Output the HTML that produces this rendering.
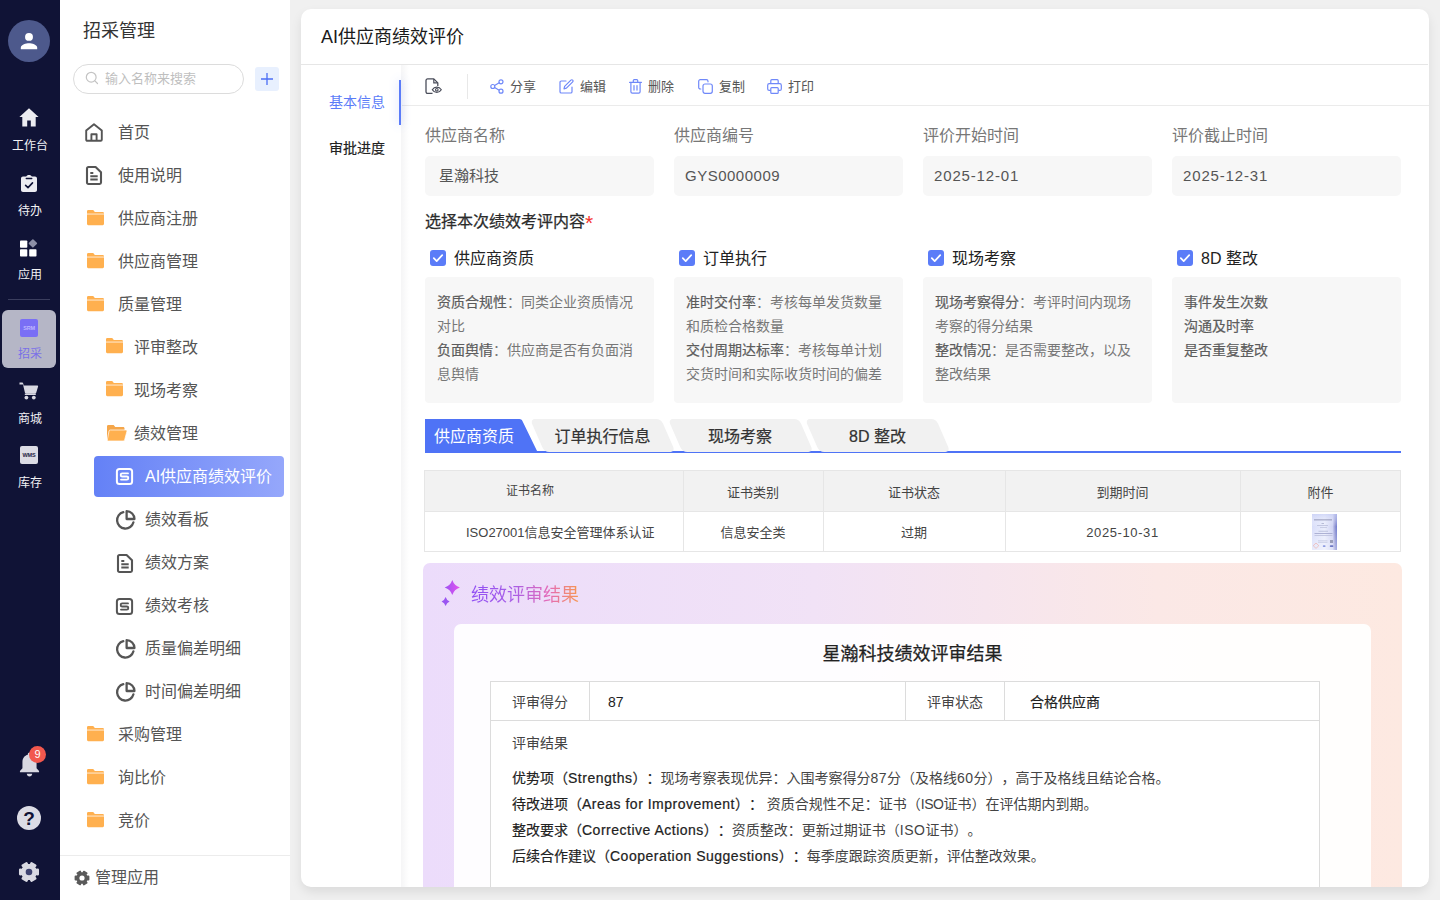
<!DOCTYPE html>
<html lang="zh-CN">
<head>
<meta charset="utf-8">
<title>AI供应商绩效评价</title>
<style>
*{box-sizing:border-box;margin:0;padding:0}
html,body{width:1440px;height:900px;overflow:hidden}
body{position:relative;background:#f0f0f0;font-family:"Liberation Sans","Noto Sans CJK SC",sans-serif;color:#333;-webkit-font-smoothing:antialiased;text-spacing-trim:space-all}
.abs{position:absolute}
svg{display:block;overflow:visible}
/* rail */
#rail{position:absolute;left:0;top:0;width:60px;height:900px;background:#101336}
#rail .avatar{position:absolute;left:8px;top:20px;width:42px;height:42px;border-radius:50%;background:#4d598c}
.ri{position:absolute;left:0;width:60px;text-align:center;color:#f2f2f5;font-size:12px;line-height:14px}
.ri svg{margin:0 auto}
.ri .t{position:absolute;left:0;width:60px;text-align:center}
/* sidebar */
#side{position:absolute;left:60px;top:0;width:230px;height:900px;background:#fff}
#sideshadow{position:absolute;left:290px;top:0;width:10px;height:900px;background:linear-gradient(90deg,#e9e9e9,#f0f0f0)}
.mi{position:absolute;font-size:16px;line-height:20px;color:#555;white-space:nowrap}
.ic{position:absolute}
/* card */
#card{position:absolute;left:301px;top:9px;width:1128px;height:878px;background:#fff;border-radius:10px;overflow:hidden;box-shadow:0 5px 12px -1px rgba(0,0,0,.10)}
.t13{font-size:13px}
.tb{position:absolute;top:77px;font-size:13px;line-height:18px;color:#555;white-space:nowrap}
.lab{position:absolute;font-size:16px;line-height:22px;color:#777;white-space:nowrap}
.inp{position:absolute;top:156px;width:229px;height:40px;background:#f7f7f7;border-radius:5px;font-size:15px;line-height:40px;color:#555;padding-left:14px;white-space:nowrap}
.cb{position:absolute;top:250px;width:16px;height:16px;border-radius:3px;background:#5b7cf8}
.cbl{position:absolute;top:247px;font-size:16px;line-height:22px;color:#222;white-space:nowrap}
.desc{position:absolute;top:277px;width:229px;height:126px;background:#f7f7f7;border-radius:4px;padding:13px 12px 0 12px;font-size:14px;line-height:24px;color:#777}
.desc b{font-weight:400;color:#5c5c5c;-webkit-text-stroke:.2px #5c5c5c}
.gtab{position:absolute;top:419px;height:32.5px;width:131px;background:#f1f1f1;border-radius:5px;transform:skewX(23.6deg);transform-origin:0 0}
.gtt{position:absolute;top:425px;font-size:16px;line-height:22px;color:#333;font-weight:400;-webkit-text-stroke:.22px #333;white-space:nowrap;text-align:center}
.th{position:absolute;font-size:13px;line-height:18px;color:#444;white-space:nowrap;text-align:center}
.rl{position:absolute;left:512px;font-size:14px;line-height:20px;color:#444;white-space:nowrap}
.rl b{font-weight:400;color:#222;-webkit-text-stroke:.18px #222}
.rl i{font-style:normal;font-weight:400;letter-spacing:.5px;-webkit-text-stroke:.22px #222}
.rl u{text-decoration:none;letter-spacing:.5px}
</style>
</head>
<body>
<div id="rail">
<div class="avatar"><svg width="42" height="42" viewBox="0 0 42 42"><circle cx="21" cy="16.900" r="3.950" fill="#fff"/><path d="M12.800 29.200v-1.500c0-3 5.400-4.400 8.200-4.400s8.200 1.400 8.200 4.400v1.500z" fill="#fff"/></svg></div>
<!-- 工作台 -->
<svg class="abs" style="left:19px;top:108px" width="20" height="19" viewBox="0 0 20 19"><path d="M10 0.3 0.4 9h2.9v9.6h4.9v-6.2h3.6v6.2h4.9V9h2.9z" fill="#ececf1"/></svg>
<div class="ri" style="top:139px">工作台</div>
<!-- 待办 -->
<svg class="abs" style="left:21px;top:175px" width="16" height="17" viewBox="0 0 16 17"><path d="M5.2 1.6C5.5.7 6.6 0 8 0s2.500.7 2.800 1.600H14c1.100 0 2 .9 2 2V15c0 1.100-.9 2-2 2H2c-1.100 0-2-.9-2-2V3.600c0-1.100.9-2 2-2z" fill="#ececf1"/><path d="M5.300 3.400h5.400" stroke="#101336" stroke-width="1.500" stroke-linecap="round"/><path d="M4.600 10.300 7 12.600l4.500-4.700" fill="none" stroke="#101336" stroke-width="1.600" stroke-linecap="round" stroke-linejoin="round"/></svg>
<div class="ri" style="top:204px">待办</div>
<!-- 应用 -->
<svg class="abs" style="left:20px;top:239px" width="18" height="18" viewBox="0 0 18 18"><rect x="0" y="1.500" width="7.300" height="7.300" rx=".8" fill="#fff"/><rect x="0" y="10.300" width="7.300" height="7.300" rx=".8" fill="#fff"/><rect x="9.200" y="10.300" width="7.300" height="7.300" rx=".8" fill="#fff"/><rect x="9.700" y="1.200" width="6.400" height="6.400" rx=".8" transform="rotate(45 12.900 4.400)" fill="#8d8fa6"/></svg>
<div class="ri" style="top:268px">应用</div>
<div class="abs" style="left:8px;top:299px;width:42px;height:1px;background:#3b3e5e"></div>
<!-- 招采 selected -->
<div class="abs" style="left:2px;top:310px;width:54px;height:58px;border-radius:6px;background:#b5b6c6"></div>
<div class="abs" style="left:20px;top:319px;width:18px;height:18px;border-radius:2px;background:#7a6ff5"></div>
<div class="abs" style="left:20px;top:324px;width:18px;text-align:center;font-size:5.500px;line-height:8px;color:#bdb6ff;font-weight:bold;letter-spacing:-.2px">SRM</div>
<div class="ri" style="top:347px;color:#7a70e8">招采</div>
<!-- 商城 -->
<svg class="abs" style="left:19px;top:382px" width="20" height="18" viewBox="0 0 20 18"><path d="M.5 0.600h2.700c.5 0 .9.300 1 .8l.5 2h13.600c.6 0 1 .6.800 1.200l-1.900 6.100c-.2.600-.7 1-1.400 1H7.300c-.7 0-1.300-.5-1.400-1.200L4 2.600H.5z" fill="#d9d9e2"/><circle cx="7.400" cy="15.600" r="1.900" fill="#d9d9e2"/><circle cx="14.800" cy="15.600" r="1.900" fill="#d9d9e2"/><path d="M5.800 12.300h11" stroke="#d9d9e2" stroke-width="1.400"/></svg>
<div class="ri" style="top:412px">商城</div>
<!-- 库存 -->
<div class="abs" style="left:20px;top:446px;width:18px;height:18px;border-radius:2px;background:#dcdce5"></div>
<div class="abs" style="left:20px;top:451px;width:18px;text-align:center;font-size:5.500px;line-height:8px;color:#20223f;font-weight:bold;letter-spacing:-.2px">WMS</div>
<div class="ri" style="top:476px">库存</div>
<!-- bell -->
<svg class="abs" style="left:18.500px;top:750.500px" width="21" height="27" viewBox="0 0 20 26"><path d="M10 1.500c.9 0 1.600.7 1.600 1.600v.6c3.100.7 5.200 3.400 5.200 6.800v6.200l2.400 2.500v1.200H.8v-1.200l2.400-2.500v-6.200c0-3.400 2.100-6.100 5.200-6.800v-.6c0-.9.700-1.600 1.600-1.600z" fill="#d9d9e2"/><path d="M7.400 22h5.200c0 1.500-1.200 2.600-2.600 2.600S7.400 23.500 7.400 22z" fill="#d9d9e2"/></svg>
<div class="abs" style="left:29px;top:746px;width:17px;height:17px;border-radius:50%;background:#f2584e;color:#fff;font-size:11px;line-height:17px;text-align:center">9</div>
<!-- help -->
<div class="abs" style="left:17px;top:806px;width:24px;height:24px;border-radius:50%;background:#dcdce5;color:#101336;font-size:19px;font-weight:bold;line-height:25px;text-align:center">?</div>
<!-- gear -->
<svg class="abs" style="left:18.700px;top:862px" width="20" height="20" viewBox="-10 -10 20 20"><path d="M8.83 -2.20L8.83 2.20L6.63 1.90L4.96 4.79L6.32 6.55L2.51 8.75L1.67 6.70L-1.67 6.70L-2.51 8.75L-6.32 6.55L-4.96 4.79L-6.63 1.90L-8.83 2.20L-8.83 -2.20L-6.63 -1.90L-4.96 -4.79L-6.32 -6.55L-2.51 -8.75L-1.67 -6.70L1.67 -6.70L2.51 -8.75L6.32 -6.55L4.96 -4.79L6.63 -1.90Z" fill="#d9d9e2" stroke="#d9d9e2" stroke-width="2.400" stroke-linejoin="round"/><circle r="3.300" fill="#3d416f"/></svg>
</div>
<div id="side">
<div class="abs" style="left:23px;top:18px;font-size:18px;line-height:26px;color:#333">招采管理</div>
<div class="abs" style="left:13px;top:64px;width:171px;height:30px;border:1px solid #dcdcdc;border-radius:15px"></div>
<svg class="abs" style="left:25px;top:71px" width="14" height="14" viewBox="0 0 14 14"><circle cx="6.200" cy="6.200" r="4.900" fill="none" stroke="#c4c4c4" stroke-width="1.200"/><path d="M9.900 9.900l2.600 2.600" stroke="#c4c4c4" stroke-width="1.200" stroke-linecap="round"/></svg>
<div class="abs" style="left:45px;top:70px;font-size:13px;line-height:18px;color:#bfbfbf">输入名称来搜索</div>
<div class="abs" style="left:195px;top:67px;width:24px;height:24px;border-radius:3px;background:#e8f0fe"></div>
<svg class="abs" style="left:201px;top:73px" width="12" height="12" viewBox="0 0 12 12"><path d="M6 0v12M0 6h12" stroke="#4c6ef5" stroke-width="1.300"/></svg>
<svg class="ic" style="left:25px;top:123px" width="18" height="19" viewBox="0 0 18 19"><path d="M1.200 7.600 9 1.300l7.800 6.300v9.100c0 .6-.5 1.100-1.100 1.100H2.300c-.6 0-1.100-.5-1.100-1.100z" fill="none" stroke="#555" stroke-width="1.900" stroke-linejoin="round"/><path d="M6.400 17.500v-6.300h5.200v6.300" fill="none" stroke="#555" stroke-width="1.900" stroke-linejoin="round"/></svg>
<div class="mi" style="left:58px;top:123px">首页</div>
<svg class="ic" style="left:26px;top:166px" width="16" height="19" viewBox="0 0 16 19"><path d="M2.400 1h7.200L15 6.200v10.400c0 .8-.6 1.400-1.400 1.400H2.400C1.600 18 1 17.400 1 16.600V2.400C1 1.600 1.600 1 2.400 1z" fill="none" stroke="#555" stroke-width="2.1" stroke-linejoin="round"/><path d="M4.300 7h3M4.300 10.300h7.400M4.300 13.600h7.400" stroke="#555" stroke-width="2"/></svg>
<div class="mi" style="left:58px;top:166px">使用说明</div>
<svg class="ic" style="left:26.7px;top:209.8px" width="17" height="15.200" viewBox="0 0 18 15" preserveAspectRatio="none"><path d="M1.300 0h5.300l1.700 1.900h8.400c.7 0 1.300.6 1.300 1.300v10.500c0 .7-.6 1.300-1.300 1.300H1.300C.6 15 0 14.400 0 13.700V1.300C0 .6.600 0 1.300 0z" fill="#ffb04f"/><path d="M0 4h18" stroke="#fff" stroke-width=".9" opacity=".85"/></svg>
<div class="mi" style="left:58px;top:209px">供应商注册</div>
<svg class="ic" style="left:26.7px;top:252.8px" width="17" height="15.200" viewBox="0 0 18 15" preserveAspectRatio="none"><path d="M1.300 0h5.300l1.700 1.900h8.400c.7 0 1.300.6 1.300 1.300v10.500c0 .7-.6 1.300-1.300 1.300H1.300C.6 15 0 14.400 0 13.700V1.300C0 .6.600 0 1.300 0z" fill="#ffb04f"/><path d="M0 4h18" stroke="#fff" stroke-width=".9" opacity=".85"/></svg>
<div class="mi" style="left:58px;top:252px">供应商管理</div>
<svg class="ic" style="left:26.7px;top:295.8px" width="17" height="15.200" viewBox="0 0 18 15" preserveAspectRatio="none"><path d="M1.300 0h5.300l1.700 1.900h8.400c.7 0 1.300.6 1.300 1.300v10.500c0 .7-.6 1.300-1.300 1.300H1.300C.6 15 0 14.400 0 13.700V1.300C0 .6.600 0 1.300 0z" fill="#ffb04f"/><path d="M0 4h18" stroke="#fff" stroke-width=".9" opacity=".85"/></svg>
<div class="mi" style="left:58px;top:295px">质量管理</div>
<svg class="ic" style="left:45.8px;top:337.8px" width="17" height="15.200" viewBox="0 0 18 15" preserveAspectRatio="none"><path d="M1.300 0h5.300l1.700 1.900h8.400c.7 0 1.300.6 1.300 1.300v10.500c0 .7-.6 1.300-1.300 1.300H1.300C.6 15 0 14.400 0 13.700V1.300C0 .6.600 0 1.300 0z" fill="#ffb04f"/><path d="M0 4h18" stroke="#fff" stroke-width=".9" opacity=".85"/></svg>
<div class="mi" style="left:74px;top:338px">评审整改</div>
<svg class="ic" style="left:45.8px;top:380.8px" width="17" height="15.200" viewBox="0 0 18 15" preserveAspectRatio="none"><path d="M1.300 0h5.300l1.700 1.900h8.400c.7 0 1.300.6 1.300 1.300v10.500c0 .7-.6 1.300-1.300 1.300H1.300C.6 15 0 14.400 0 13.700V1.300C0 .6.600 0 1.300 0z" fill="#ffb04f"/><path d="M0 4h18" stroke="#fff" stroke-width=".9" opacity=".85"/></svg>
<div class="mi" style="left:74px;top:381px">现场考察</div>
<svg class="ic" style="left:46.500px;top:425px" width="20" height="16" viewBox="0 0 20 16"><path d="M1.300 0h5.300l1.700 1.900h7.900c.7 0 1.300.6 1.300 1.300V14H0V1.300C0 .6.600 0 1.300 0z" fill="#f5a64a"/><path d="M3.300 5h15.600c.7 0 1.200.7 1 1.400l-2.300 8.500c-.2.600-.7 1.100-1.300 1.100H1.200c-.6 0-1-.5-.9-1.100L2 6c.1-.6.700-1 1.300-1z" fill="#ffb04f" stroke="#fff" stroke-width=".7"/></svg>
<div class="mi" style="left:74px;top:424px">绩效管理</div>
<div class="abs" style="left:34px;top:456px;width:190px;height:41px;border-radius:4px;background:linear-gradient(90deg,#6481f6,#95a7fb)"></div>
<svg class="ic" style="left:56px;top:468px" width="17" height="17" viewBox="0 0 17 17"><rect x=".9" y=".9" width="15.200" height="15.200" rx="2.600" fill="none" stroke="#fff" stroke-width="2"/><path d="M12 5.400H6.200c-.9 0-1.500.7-1.500 1.500s.6 1.600 1.500 1.600h4.600c.9 0 1.500.7 1.500 1.500s-.6 1.600-1.500 1.600H5" fill="none" stroke="#fff" stroke-width="1.85" stroke-linecap="round"/></svg>
<div class="mi" style="left:85px;top:467px;color:#fff">AI供应商绩效评价</div>
<svg class="ic" style="left:54.60px;top:510.30px" width="20.5" height="20.5" viewBox="0 0 18 18"><path d="M7.300 1.900A7.300 7.300 0 1 0 16.200 10.800" fill="none" stroke="#555" stroke-width="2" stroke-linecap="round"/><path d="M10.200 1v6.900h6.900A6.900 6.900 0 0 0 10.200 1z" fill="none" stroke="#555" stroke-width="2" stroke-linejoin="round"/></svg>
<div class="mi" style="left:85px;top:510px">绩效看板</div>
<svg class="ic" style="left:57px;top:554px" width="16" height="19" viewBox="0 0 16 19"><path d="M2.400 1h7.200L15 6.200v10.400c0 .8-.6 1.400-1.400 1.400H2.400C1.600 18 1 17.400 1 16.600V2.400C1 1.600 1.600 1 2.400 1z" fill="none" stroke="#555" stroke-width="2.1" stroke-linejoin="round"/><path d="M4.300 7h3M4.300 10.300h7.400M4.300 13.600h7.400" stroke="#555" stroke-width="2"/></svg>
<div class="mi" style="left:85px;top:553px">绩效方案</div>
<svg class="ic" style="left:56px;top:598px" width="17" height="17" viewBox="0 0 17 17"><rect x=".9" y=".9" width="15.200" height="15.200" rx="2.600" fill="none" stroke="#555" stroke-width="2"/><path d="M12 5.400H6.200c-.9 0-1.500.7-1.500 1.500s.6 1.600 1.500 1.600h4.600c.9 0 1.500.7 1.500 1.500s-.6 1.600-1.500 1.600H5" fill="none" stroke="#555" stroke-width="1.85" stroke-linecap="round"/></svg>
<div class="mi" style="left:85px;top:596px">绩效考核</div>
<svg class="ic" style="left:54.60px;top:639.30px" width="20.5" height="20.5" viewBox="0 0 18 18"><path d="M7.300 1.900A7.300 7.300 0 1 0 16.200 10.800" fill="none" stroke="#555" stroke-width="2" stroke-linecap="round"/><path d="M10.200 1v6.900h6.900A6.900 6.900 0 0 0 10.200 1z" fill="none" stroke="#555" stroke-width="2" stroke-linejoin="round"/></svg>
<div class="mi" style="left:85px;top:639px">质量偏差明细</div>
<svg class="ic" style="left:54.60px;top:682.30px" width="20.5" height="20.5" viewBox="0 0 18 18"><path d="M7.300 1.900A7.300 7.300 0 1 0 16.200 10.800" fill="none" stroke="#555" stroke-width="2" stroke-linecap="round"/><path d="M10.200 1v6.900h6.900A6.900 6.900 0 0 0 10.200 1z" fill="none" stroke="#555" stroke-width="2" stroke-linejoin="round"/></svg>
<div class="mi" style="left:85px;top:682px">时间偏差明细</div>
<svg class="ic" style="left:26.7px;top:725.8px" width="17" height="15.200" viewBox="0 0 18 15" preserveAspectRatio="none"><path d="M1.300 0h5.300l1.700 1.900h8.400c.7 0 1.300.6 1.300 1.300v10.500c0 .7-.6 1.300-1.300 1.300H1.300C.6 15 0 14.400 0 13.700V1.300C0 .6.600 0 1.300 0z" fill="#ffb04f"/><path d="M0 4h18" stroke="#fff" stroke-width=".9" opacity=".85"/></svg>
<div class="mi" style="left:58px;top:725px">采购管理</div>
<svg class="ic" style="left:26.7px;top:768.8px" width="17" height="15.200" viewBox="0 0 18 15" preserveAspectRatio="none"><path d="M1.300 0h5.300l1.700 1.900h8.400c.7 0 1.300.6 1.300 1.300v10.500c0 .7-.6 1.300-1.300 1.300H1.300C.6 15 0 14.400 0 13.700V1.300C0 .6.600 0 1.300 0z" fill="#ffb04f"/><path d="M0 4h18" stroke="#fff" stroke-width=".9" opacity=".85"/></svg>
<div class="mi" style="left:58px;top:768px">询比价</div>
<svg class="ic" style="left:26.7px;top:811.8px" width="17" height="15.200" viewBox="0 0 18 15" preserveAspectRatio="none"><path d="M1.300 0h5.300l1.700 1.900h8.400c.7 0 1.300.6 1.300 1.300v10.500c0 .7-.6 1.300-1.300 1.300H1.300C.6 15 0 14.400 0 13.700V1.300C0 .6.600 0 1.300 0z" fill="#ffb04f"/><path d="M0 4h18" stroke="#fff" stroke-width=".9" opacity=".85"/></svg>
<div class="mi" style="left:58px;top:811px">竞价</div>

<div class="abs" style="left:0;top:855px;width:230px;height:1px;background:#ececec"></div>
<svg class="abs" style="left:13.600px;top:870px" width="16" height="16" viewBox="-8 -8 16 16"><path d="M6.50 -1.62L6.50 1.62L4.90 1.41L3.67 3.54L4.65 4.82L1.85 6.44L1.23 4.95L-1.23 4.95L-1.85 6.44L-4.65 4.82L-3.67 3.54L-4.90 1.41L-6.50 1.62L-6.50 -1.62L-4.90 -1.41L-3.67 -3.54L-4.65 -4.82L-1.85 -6.44L-1.23 -4.95L1.23 -4.95L1.85 -6.44L4.65 -4.82L3.67 -3.54L4.90 -1.41Z" fill="#5a5a5a" stroke="#5a5a5a" stroke-width="1.800" stroke-linejoin="round"/><circle r="2.600" fill="#fff"/></svg>
<div class="mi" style="left:35px;top:868px">管理应用</div>
</div>
<div id="card">
<div class="abs" style="left:20px;top:15px;font-size:18px;line-height:26px;color:#1a1a1a">AI供应商绩效评价</div>
<div class="abs" style="left:0;top:55px;width:1127px;height:1px;background:#e6e6e6"></div>
<div class="abs" style="left:100px;top:97px;width:1027px;height:900px;background:#fff"></div>
<div class="abs" style="left:100px;top:56px;width:1px;height:900px;background:transparent"></div>

<div class="abs" style="left:98px;top:71px;width:2px;height:45px;background:#5b7cf8;z-index:3;box-shadow:0 0 10px rgba(91,124,248,.42)"></div>
<div class="abs" style="left:28px;top:83px;font-size:14px;line-height:20px;color:#5b7cf8">基本信息</div>
<div class="abs" style="left:28px;top:129px;font-size:14px;line-height:20px;color:#222;font-weight:400;-webkit-text-stroke:.2px #222">审批进度</div>
<div class="abs" style="left:101px;top:56px;width:1027px;height:40px;background:#fff"></div>
<div class="abs" style="left:101px;top:96px;width:1027px;height:1px;background:#ebebeb"></div>
<div class="abs" style="left:100px;top:56px;width:8px;height:900px;background:linear-gradient(90deg,rgba(0,0,30,.04),rgba(0,0,30,0))"></div>
<div class="abs" style="left:166px;top:65px;width:1px;height:25px;background:#e8e8e8"></div>
<svg class="abs" style="left:124px;top:69px" width="17" height="17" viewBox="0 0 17 17"><path d="M7.500 15.400H2.600c-.9 0-1.600-.7-1.600-1.600V2.500C1 1.600 1.700.9 2.600.9h6.200l4 4v3" fill="none" stroke="#4a4d5a" stroke-width="1.300" stroke-linejoin="round"/><path d="M8.800 1v3.900h3.900" fill="none" stroke="#4a4d5a" stroke-width="1.200"/><path d="M7.300 11.800c1.100-1.800 2.700-2.700 4.500-2.700s3.400.9 4.500 2.700c-1.100 1.800-2.700 2.700-4.500 2.700s-3.400-.9-4.500-2.700z" fill="#fff" stroke="#4a4d5a" stroke-width="1.200"/><circle cx="11.800" cy="11.800" r="1.300" fill="none" stroke="#4a4d5a" stroke-width="1.100"/></svg>
<svg class="abs" style="left:189px;top:70px" width="14" height="15" viewBox="0 0 14 15"><circle cx="11" cy="2.800" r="2" fill="none" stroke="#6f88f9" stroke-width="1.200"/><circle cx="11" cy="12.200" r="2" fill="none" stroke="#6f88f9" stroke-width="1.200"/><circle cx="2.800" cy="7.500" r="2" fill="none" stroke="#6f88f9" stroke-width="1.200"/><path d="M4.600 6.500l4.600-2.700M4.600 8.500l4.600 2.700" stroke="#6f88f9" stroke-width="1.200"/></svg>
<div class="tb" style="left:209px;top:69px">分享</div>
<svg class="abs" style="left:257.5px;top:70px" width="15" height="15" viewBox="0 0 15 15"><path d="M7 2H2.300C1.600 2 1 2.600 1 3.300v9.400c0 .7.600 1.300 1.300 1.300h9.400c.7 0 1.300-.6 1.300-1.300V8" fill="none" stroke="#6f88f9" stroke-width="1.200" stroke-linecap="round"/><path d="M11.900 1.100c.5-.5 1.300-.5 1.800 0s.5 1.300 0 1.800L7.400 9.200l-2.400.6.600-2.400z" fill="none" stroke="#6f88f9" stroke-width="1.200" stroke-linejoin="round"/></svg>
<div class="tb" style="left:279px;top:69px">编辑</div>
<svg class="abs" style="left:327.5px;top:70px" width="13" height="15" viewBox="0 0 13 15"><path d="M.6 3.400h11.800M4.300 3.200V1.600c0-.5.400-.9.900-.9h2.600c.5 0 .9.400.9.900v1.600" fill="none" stroke="#6f88f9" stroke-width="1.200" stroke-linecap="round"/><path d="M1.900 3.600v9.200c0 .8.600 1.400 1.400 1.400h6.400c.8 0 1.400-.6 1.400-1.400V3.600" fill="none" stroke="#6f88f9" stroke-width="1.200"/><path d="M5 6.500v4.600M8 6.500v4.600" stroke="#6f88f9" stroke-width="1.200" stroke-linecap="round"/></svg>
<div class="tb" style="left:347px;top:69px">删除</div>
<svg class="abs" style="left:397px;top:70px" width="15" height="15" viewBox="0 0 15 15"><rect x="5" y="5" width="9.300" height="9.300" rx="2" fill="none" stroke="#6f88f9" stroke-width="1.200"/><path d="M2.800 10H2.300C1.400 10 .7 9.300.7 8.400V2.300C.7 1.400 1.400.7 2.300.7h6.100c.9 0 1.600.7 1.600 1.600v.5" fill="none" stroke="#6f88f9" stroke-width="1.200" stroke-linecap="round"/></svg>
<div class="tb" style="left:418px;top:69px">复制</div>
<svg class="abs" style="left:465.5px;top:70px" width="15" height="15" viewBox="0 0 15 15"><path d="M3.800 4.600V1.700c0-.6.400-1 1-1h5.400c.6 0 1 .4 1 1v2.900" fill="none" stroke="#6f88f9" stroke-width="1.200"/><path d="M3.700 11.400H2.200c-.8 0-1.500-.7-1.500-1.500V6.200c0-.8.700-1.500 1.500-1.500h10.600c.8 0 1.500.7 1.500 1.500v3.700c0 .8-.7 1.500-1.500 1.500h-1.500" fill="none" stroke="#6f88f9" stroke-width="1.200"/><rect x="3.800" y="8.700" width="7.400" height="5.600" rx=".9" fill="none" stroke="#6f88f9" stroke-width="1.200"/></svg>
<div class="tb" style="left:487px;top:69px">打印</div>
<div class="lab" style="left:124px;top:116px">供应商名称</div>
<div class="inp" style="left:124px;top:147px;">星瀚科技</div>
<div class="lab" style="left:373px;top:116px">供应商编号</div>
<div class="inp" style="left:373px;top:147px;padding-left:11px;letter-spacing:.5px">GYS0000009</div>
<div class="lab" style="left:622px;top:116px">评价开始时间</div>
<div class="inp" style="left:622px;top:147px;padding-left:11px;letter-spacing:.85px">2025-12-01</div>
<div class="lab" style="left:871px;top:116px">评价截止时间</div>
<div class="inp" style="left:871px;top:147px;padding-left:11px;letter-spacing:.85px">2025-12-31</div>
<div class="abs" style="left:124px;top:202px;font-size:16px;line-height:22px;color:#2b2b2b;font-weight:400;white-space:nowrap;-webkit-text-stroke:.25px #2b2b2b">选择本次绩效考评内容<span style="color:#f5322d;font-size:21px;line-height:10px;position:relative;top:2.500px;-webkit-text-stroke:0">*</span></div>
<div class="cb" style="left:129px;top:241px"><svg width="16" height="16" viewBox="0 0 16 16"><path d="M3.800 8.200l2.900 2.900 5.500-5.900" fill="none" stroke="#fff" stroke-width="1.700" stroke-linecap="round" stroke-linejoin="round"/></svg></div>
<div class="cbl" style="left:153px;top:239px">供应商资质</div>
<div class="desc" style="left:124px;top:268px"><b>资质合规性</b>：同类企业资质情况对比<br><b>负面舆情</b>：供应商是否有负面消息舆情</div>
<div class="cb" style="left:378px;top:241px"><svg width="16" height="16" viewBox="0 0 16 16"><path d="M3.800 8.200l2.900 2.900 5.500-5.900" fill="none" stroke="#fff" stroke-width="1.700" stroke-linecap="round" stroke-linejoin="round"/></svg></div>
<div class="cbl" style="left:402px;top:239px">订单执行</div>
<div class="desc" style="left:373px;top:268px"><b>准时交付率</b>：考核每单发货数量和质检合格数量<br><b>交付周期达标率</b>：考核每单计划交货时间和实际收货时间的偏差</div>
<div class="cb" style="left:627px;top:241px"><svg width="16" height="16" viewBox="0 0 16 16"><path d="M3.800 8.200l2.900 2.900 5.500-5.900" fill="none" stroke="#fff" stroke-width="1.700" stroke-linecap="round" stroke-linejoin="round"/></svg></div>
<div class="cbl" style="left:651px;top:239px">现场考察</div>
<div class="desc" style="left:622px;top:268px"><b>现场考察得分</b>：考评时间内现场考察的得分结果<br><b>整改情况</b>：是否需要整改，以及整改结果</div>
<div class="cb" style="left:876px;top:241px"><svg width="16" height="16" viewBox="0 0 16 16"><path d="M3.800 8.200l2.900 2.900 5.500-5.900" fill="none" stroke="#fff" stroke-width="1.700" stroke-linecap="round" stroke-linejoin="round"/></svg></div>
<div class="cbl" style="left:900px;top:239px">8D 整改</div>
<div class="desc" style="left:871px;top:268px"><b>事件发生次数</b><br><b>沟通及时率</b><br><b>是否重复整改</b></div>
<div class="abs" style="left:124px;top:442px;width:976px;height:2px;background:#4f73f6"></div>
<svg class="abs" style="left:124px;top:410px" width="114" height="34" viewBox="0 0 114 34"><path d="M0 34V0h94.500c1.200 0 2.300.7 2.800 1.800L113 34z" fill="#4f73f6"/></svg>
<div class="gtt" style="left:125px;top:417px;width:96px;color:#fff;font-weight:400;-webkit-text-stroke:0">供应商资质</div>
<div class="gtab" style="left:229.0px;top:410px"></div>
<div class="gtt" style="left:229.0px;top:417px;width:145px">订单执行信息</div>
<div class="gtab" style="left:366.5px;top:410px"></div>
<div class="gtt" style="left:366.5px;top:417px;width:145px">现场考察</div>
<div class="gtab" style="left:504.0px;top:410px"></div>
<div class="gtt" style="left:504.0px;top:417px;width:145px">8D 整改</div>
<div class="abs" style="left:123px;top:461px;width:977px;height:42px;background:#f2f2f2;border:1px solid #e6e6e6"></div>
<div class="abs" style="left:123px;top:503px;width:977px;height:40px;background:#fff;border:1px solid #e6e6e6;border-top:none"></div>
<div class="abs" style="left:382px;top:461px;width:1px;height:81px;background:#e6e6e6"></div>
<div class="abs" style="left:522px;top:461px;width:1px;height:81px;background:#e6e6e6"></div>
<div class="abs" style="left:704px;top:461px;width:1px;height:81px;background:#e6e6e6"></div>
<div class="abs" style="left:939px;top:461px;width:1px;height:81px;background:#e6e6e6"></div>
<div class="th" style="left:205px;top:473px;font-size:12px">证书名称</div>
<div class="th" style="left:165px;top:515px;font-size:13px">ISO27001信息安全管理体系认证</div>
<div class="th" style="left:382px;top:475px;width:140px">证书类别</div>
<div class="th" style="left:382px;top:515px;width:140px">信息安全类</div>
<div class="th" style="left:522px;top:475px;width:182px">证书状态</div>
<div class="th" style="left:522px;top:515px;width:182px">过期</div>
<div class="th" style="left:704px;top:475px;width:235px">到期时间</div>
<div class="th" style="left:704px;top:515px;width:235px;letter-spacing:.6px">2025-10-31</div>
<div class="th" style="left:939px;top:475px;width:161px">附件</div>
<svg class="abs" style="left:1011px;top:505px" width="25" height="36" viewBox="0 0 25 36"><defs><linearGradient id="tg" x1="0" y1="0" x2="1" y2="0"><stop offset="0" stop-color="#d9defa"/><stop offset=".5" stop-color="#e9ecfc"/><stop offset=".82" stop-color="#cfd3f3"/><stop offset=".93" stop-color="#8f94d3"/><stop offset="1" stop-color="#6f7ccf"/></linearGradient><linearGradient id="tg2" x1="0" y1="0" x2="0" y2="1"><stop offset="0" stop-color="#c9d0f6" stop-opacity=".7"/><stop offset=".35" stop-color="#fff" stop-opacity="0"/><stop offset="1" stop-color="#fff" stop-opacity=".35"/></linearGradient></defs><rect width="25" height="36" fill="url(#tg)"/><rect width="25" height="36" fill="url(#tg2)"/><rect x="2" y="5.300" width="18" height="1.100" fill="#6e7397" opacity=".6"/><rect x="9.500" y="9" width="2.500" height=".7" fill="#a3a8c8"/><rect x="5" y="11" width="11" height=".7" fill="#b3b8d6"/><rect x="8" y="13.200" width="7" height=".7" fill="#bcc0dc"/><rect x="6.500" y="16.800" width="9.500" height=".8" fill="#b3b8d6"/><rect x="2.500" y="19" width="18" height=".9" fill="#a6abd0"/><rect x="2.500" y="21" width="18" height=".8" fill="#bcc0dc"/><rect x="6" y="26.500" width="9.500" height=".8" fill="#bfc3de"/><rect x="6" y="28" width="9.500" height=".7" fill="#c6cae2"/><rect x="18" y="26" width="3" height="3" fill="#9a9eb8"/><path d="M4 29l2.800 2.700L4 34.400 1.200 31.700z" fill="none" stroke="#f0a79c" stroke-width=".8" opacity=".75"/><rect x="10.800" y="31.300" width="2.800" height="1.700" rx=".8" fill="#8d9be0"/><rect x="17.800" y="31.300" width="3.600" height="1.700" rx=".8" fill="#6c78c4"/></svg>
<div class="abs" style="left:122px;top:554px;width:979px;height:400px;border-radius:7px;background:linear-gradient(90deg,#ecdcfb 0%,#f1e2f6 40%,#fbe8e6 75%,#fde9e1 100%)"></div>
<svg class="abs" style="left:140px;top:571px" width="20" height="27" viewBox="0 0 20 27"><defs><linearGradient id="sg" x1="0" y1="0" x2="1" y2="0"><stop offset="0" stop-color="#9a52f2"/><stop offset="1" stop-color="#e652f0"/></linearGradient></defs><path transform="translate(11.300 7.400)" d="M0-7.500Q1.900-1.900 7.600 0Q1.900 1.900 0 7.500Q-1.900 1.900-7.600 0Q-1.900-1.900 0-7.500Z" fill="url(#sg)"/><path transform="translate(4.600 21.600)" d="M0-4.500Q1.100-1.100 4 0Q1.100 1.100 0 4.500Q-1.100 1.100-4 0Q-1.100-1.100 0-4.500Z" fill="#9a55f1"/></svg>
<div class="abs" style="left:170px;top:573px;font-size:18px;line-height:26px;white-space:nowrap;background:linear-gradient(90deg,#8f4ef4 0%,#a95ee6 40%,#e46cb8 72%,#f7984f 100%);-webkit-background-clip:text;background-clip:text;color:transparent">绩效评审结果</div>
<div class="abs" style="left:153px;top:615px;width:917px;height:300px;border-radius:7px 7px 0 0;background:rgba(255,255,255,.93)"></div>
<div class="abs" style="left:153px;top:632px;width:917px;text-align:center;font-size:18px;line-height:26px;color:#222;font-weight:400;-webkit-text-stroke:.25px #222">星瀚科技绩效评审结果</div>
<div class="abs" style="left:189px;top:672px;width:830px;height:300px;border:1px solid #dcdcdc;background:#fff"></div>
<div class="abs" style="left:189px;top:711px;width:830px;height:1px;background:#dcdcdc"></div>
<div class="abs" style="left:288px;top:672px;width:1px;height:39px;background:#dcdcdc"></div>
<div class="abs" style="left:604px;top:672px;width:1px;height:39px;background:#dcdcdc"></div>
<div class="abs" style="left:703px;top:672px;width:1px;height:39px;background:#dcdcdc"></div>
<div class="rl" style="left:211px;top:683px">评审得分</div>
<div class="rl" style="left:307px;top:683px;color:#222">87</div>
<div class="rl" style="left:626px;top:683px">评审状态</div>
<div class="rl" style="left:729px;top:683px;color:#222;font-weight:400;-webkit-text-stroke:.2px #222">合格供应商</div>
<div class="rl" style="left:211px;top:724px">评审结果</div>
<div class="rl" id="L1" style="left:211px;top:759px"><b>优势项（<i>Strengths</i>）：</b>现场考察表现优异：入围考察得分<u>87</u>分（及格线<u>60</u>分），高于及格线且结论合格。</div>
<div class="rl" id="L2" style="left:211px;top:785px"><b>待改进项（<i>Areas for Improvement</i>）：</b> 资质合规性不足：证书（<u style="letter-spacing:-.5px">ISO</u>证书）在评估期内到期。</div>
<div class="rl" id="L3" style="left:211px;top:811px"><b>整改要求（<i>Corrective Actions</i>）：</b>资质整改：更新过期证书（<u>ISO</u>证书）。</div>
<div class="rl" id="L4" style="left:211px;top:837px"><b>后续合作建议（<i>Cooperation Suggestions</i>）：</b>每季度跟踪资质更新，评估整改效果。</div>
</div>
</body>
</html>
